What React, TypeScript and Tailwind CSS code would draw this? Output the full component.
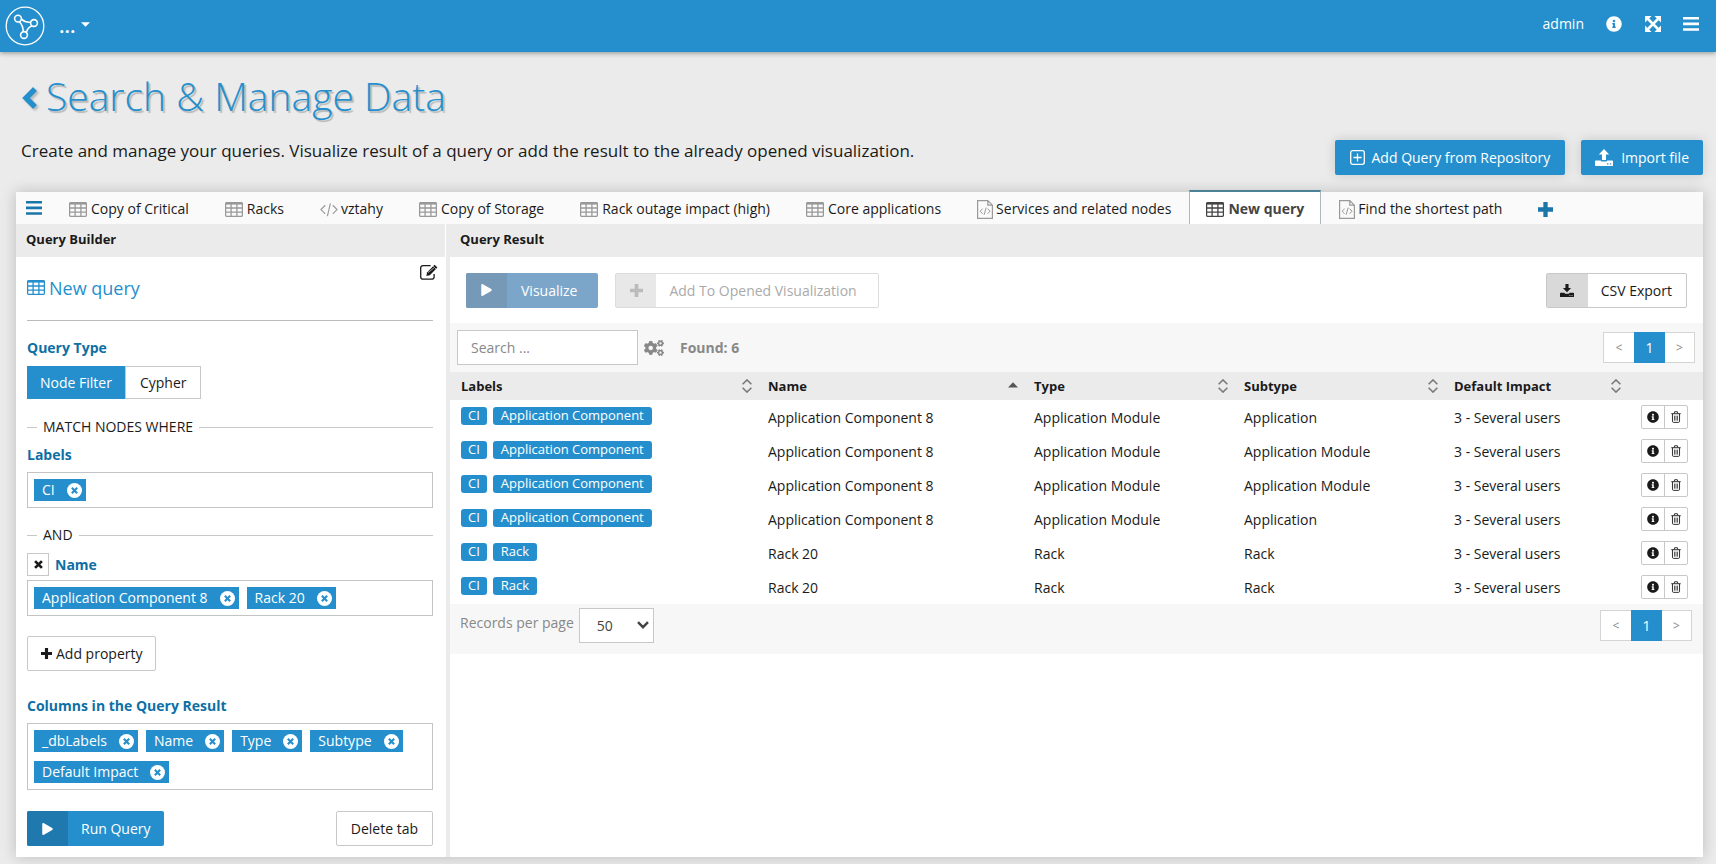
import React from "react";
import { FaCogs, FaInfoCircle, FaPlay } from "react-icons/fa";

const TableIcon = ({ className = "" }: { className?: string }) => (
  <svg viewBox="0 0 18 15" className={"h-[15px] w-[18px] shrink-0 " + className} fill="none" stroke="currentColor" aria-hidden="true">
    <rect x="0.6" y="0.6" width="16.8" height="13.8" rx="1.2" strokeWidth="1.3" />
    <path d="M0.6 1.6H17.4" strokeWidth="2" />
    <path d="M0.6 6H17.4M0.6 10.2H17.4M6.1 2V14.4M11.9 2V14.4" strokeWidth="1.3" />
  </svg>
);

const CodeIcon = () => (
  <svg viewBox="0 0 19 15" className="h-[15px] w-[18px] shrink-0 text-[#999]" fill="none" stroke="currentColor" strokeWidth="1.2" aria-hidden="true">
    <path d="M5.5 3L1 7.6L5.5 12.2M13.5 3L18 7.6L13.5 12.2M11 1L7.8 14.4" />
  </svg>
);

const FileCodeIcon = () => (
  <svg viewBox="0 0 16 19" className="h-[19px] w-4 shrink-0 text-[#999]" fill="none" stroke="currentColor" aria-hidden="true">
    <path d="M0.6 0.6H10.8L15.4 5.2V18.4H0.6ZM10.8 0.6V5.2H15.4" strokeWidth="1.2" />
    <path d="M5.6 8.6L3.2 11.2L5.6 13.8M10.6 8.6L13 11.2L10.6 13.8M9.2 7.6L7.1 14.8" strokeWidth="1" />
  </svg>
);

const BarsIcon = ({ className = "" }: { className?: string }) => (
  <svg viewBox="0 0 16 14" className={"h-[14px] w-4 " + className} fill="currentColor" aria-hidden="true">
    <path d="M0 0H16V2.6H0ZM0 5.6H16V8.2H0ZM0 11.2H16V13.8H0Z" />
  </svg>
);

const PlusIcon = ({ className = "" }: { className?: string }) => (
  <svg viewBox="0 0 14 14" className={"shrink-0 " + className} fill="none" stroke="currentColor" strokeWidth="4" aria-hidden="true">
    <path d="M7 0V14M0 7H14" />
  </svg>
);

const CrossIcon = ({ className = "" }: { className?: string }) => (
  <svg viewBox="0 0 10 10" className={"shrink-0 " + className} fill="none" stroke="currentColor" strokeWidth="3" aria-hidden="true">
    <path d="M1.2 1.2L8.8 8.8M8.8 1.2L1.2 8.8" />
  </svg>
);

const ChevronIcon = () => (
  <svg viewBox="0 0 18 24" className="h-6 w-[18px] drop-shadow-[2px_2px_1px_rgba(0,0,0,0.22)]" fill="none" stroke="currentColor" strokeWidth="5.4" aria-hidden="true">
    <path d="M14 3L5 12L14 21" />
  </svg>
);

const ExpandIcon = () => (
  <svg viewBox="0 0 16 16" className="h-4 w-4" aria-hidden="true">
    <path d="M3 3L13 13M13 3L3 13" stroke="currentColor" strokeWidth="2.6" />
    <path d="M0 0H6.6L0 6.6ZM16 0V6.6L9.4 0ZM0 16V9.4L6.6 16ZM16 16H9.4L16 9.4Z" fill="currentColor" />
  </svg>
);

const EditIcon = () => (
  <svg viewBox="0 0 18 16" className="h-4 w-[18px]" aria-hidden="true">
    <path d="M10.6 1.6H3.2Q0.7 1.6 0.7 4.1V12.7Q0.7 15.2 3.2 15.2H11.6Q14.1 15.2 14.1 12.7V10" fill="none" stroke="currentColor" strokeWidth="1.3" />
    <path d="M14.6 0.7L17.4 3.4L9.8 11.2L6.4 12.1L7 8.6Z" fill="currentColor" />
    <path d="M13.2 2.2L16 5M8 8.6L14 3.9" stroke="white" strokeWidth="0.6" />
  </svg>
);

const TrashIcon = () => (
  <svg viewBox="0 0 11 13" className="h-[12px] w-[10px]" fill="none" stroke="currentColor" aria-hidden="true">
    <path d="M0.3 2.9H10.7M3.4 2.8L4 0.7H7L7.6 2.8M1.6 3V11.2Q1.6 12.4 2.8 12.4H8.2Q9.4 12.4 9.4 11.2V3" strokeWidth="1" />
    <path d="M3.8 5V10.5M5.5 5V10.5M7.2 5V10.5" strokeWidth="0.8" />
  </svg>
);

const TrayIcon = ({ up = false, className = "" }: { up?: boolean; className?: string }) => (
  <svg viewBox="0 0 18 17" className={"shrink-0 " + className} fill="currentColor" aria-hidden="true">
    {up ? <path d="M9 0L14.2 5.6H11V11H7V5.6H3.8Z" /> : <path d="M7 0H11V5.2H14.2L9 10.6L3.8 5.2H7Z" />}
    <path fillRule="evenodd" d="M0.8 11.4H5.6L6.6 12.6H11.4L12.4 11.4H17.2Q18 11.4 18 12.2V16.2Q18 17 17.2 17H0.8Q0 17 0 16.2V12.2Q0 11.4 0.8 11.4ZM12 14.2V15.4H13.4V14.2ZM14.8 14.2V15.4H16.2V14.2Z" />
  </svg>
);

const Logo = () => (
  <svg viewBox="0 0 40 40" className="h-10 w-10" fill="none" stroke="white" aria-hidden="true">
    <circle cx="20" cy="20" r="18.8" strokeWidth="1.3" />
    <g strokeWidth="1.6">
      <circle cx="13" cy="12.6" r="3.4" />
      <circle cx="29" cy="17" r="3.4" />
      <circle cx="19" cy="29" r="3.4" />
      <path d="M16.4 13.2Q20 16.6 25.6 16.2M27 19.8Q22.6 21.6 21.4 26.4M18.2 25.6Q18.2 19.6 14.4 15.8" />
    </g>
  </svg>
);

const tabs = [
  { kind: "table", label: "Copy of Critical" },
  { kind: "table", label: "Racks" },
  { kind: "code", label: "vztahy" },
  { kind: "table", label: "Copy of Storage" },
  { kind: "table", label: "Rack outage impact (high)" },
  { kind: "table", label: "Core applications" },
  { kind: "file", label: "Services and related nodes" },
  { kind: "table", label: "New query", active: true },
  { kind: "file", label: "Find the shortest path" },
];

const rows = [
  ["Application Component", "Application Component 8", "Application Module", "Application"],
  ["Application Component", "Application Component 8", "Application Module", "Application Module"],
  ["Application Component", "Application Component 8", "Application Module", "Application Module"],
  ["Application Component", "Application Component 8", "Application Module", "Application"],
  ["Rack", "Rack 20", "Rack", "Rack"],
  ["Rack", "Rack 20", "Rack", "Rack"],
];

const Chip = ({ children }: { children: string }) => (
  <span className="flex h-[22px] items-center bg-[#258fcd] pr-1 pl-2 text-white">
    {children}
    <button type="button" aria-label={"Remove " + children} className="ml-3 flex h-[15px] w-[15px] items-center justify-center rounded-full bg-white text-[#258fcd]">
      <CrossIcon className="h-[7px] w-[7px]" />
    </button>
  </span>
);

const ChipBox = ({ label, items }: { label: string; items: string[] }) => (
  <div role="group" aria-label={label} className="flex flex-wrap content-start gap-x-2 gap-y-[9px] border border-[#c4c4c4] px-[6px] py-[6px]">
    {items.map((i) => (
      <Chip key={i}>{i}</Chip>
    ))}
  </div>
);

const Divider = ({ children }: { children: string }) => (
  <div className="flex h-5 items-center gap-[6px]">
    <span className="h-px w-[10px] bg-[#c8c8c8]" />
    {children}
    <span className="h-px flex-1 bg-[#c8c8c8]" />
  </div>
);

const Pager = () => (
  <nav aria-label="Pages" className="flex h-[31px] border border-[#d5d5d5] bg-white text-[12px] text-[#888]">
    <button type="button" aria-label="Previous page" className="w-[30px]">&lt;</button>
    <button type="button" aria-current="page" className="-my-px w-[31px] bg-[#258fcd] text-[14px] text-white">1</button>
    <button type="button" aria-label="Next page" className="w-[29px]">&gt;</button>
  </nav>
);

const Sort = ({ asc }: { asc?: boolean }) =>
  asc ? (
    <svg viewBox="0 0 10 14" className="h-[14px] w-[10px] text-[#555]" aria-hidden="true">
      <path d="M0 8.6L5 3.2L10 8.6Z" fill="currentColor" />
    </svg>
  ) : (
    <svg viewBox="0 0 10 14" className="h-[14px] w-[10px] text-[#777]" fill="none" stroke="currentColor" strokeWidth="1.5" aria-hidden="true">
      <path d="M0.6 5.2L5 0.9L9.4 5.2M0.6 8.8L5 13.1L9.4 8.8" />
    </svg>
  );

const whiteButton = "border border-[#c8c8c8] bg-white rounded-[2px]";
const fieldLabel = "font-bold leading-5 text-[#0e6fa5]";

export default function App() {
  return (
    <div className="flex min-h-screen flex-col bg-[#ebebeb] pb-[7px] font-['Open_Sans','Noto_Sans',sans-serif] text-[14px] leading-5 text-[#1a1a1a]">
      <header className="relative flex h-[52px] items-center bg-[#258fcd] pr-[17px] pl-[5px] text-white shadow-[0_1px_5px_rgba(0,0,0,0.4)]">
        <a href="#home" aria-label="Home"><Logo /></a>
        <button type="button" className="ml-[14px] flex items-center gap-[6px]">
          <span className="text-[20px] leading-6 font-semibold">...</span>
          <svg viewBox="0 0 8 4" className="mb-1 h-[5px] w-[9px]" fill="currentColor" aria-hidden="true"><path d="M0 0H8L4 4Z" /></svg>
        </button>
        <div className="ml-auto flex items-center pb-1">
          <a href="#admin" className="mr-[22px]">admin</a>
          <button type="button" aria-label="Information" className="mr-[23px]"><FaInfoCircle className="h-4 w-4" /></button>
          <button type="button" aria-label="Full screen" className="mr-[22px]"><ExpandIcon /></button>
          <button type="button" aria-label="Menu"><BarsIcon /></button>
        </div>
      </header>

      <div className="flex items-end justify-between pt-4 pr-[13px] pl-[21px]">
        <div>
          <h1 className="flex items-center gap-[7px] text-[39px] leading-[56px] font-light text-[#258fcd] [text-shadow:2px_2px_1px_rgba(0,0,0,0.22)]">
            <a href="#back" aria-label="Back" className="mt-1"><ChevronIcon /></a>
            Search &amp; Manage Data
          </h1>
          <p className="mt-[14px] mb-7 text-[17px] leading-[26px]">
            Create and manage your queries. Visualize result of a query or add the result to the already opened visualization.
          </p>
        </div>
        <div className="mb-[17px] flex gap-4 text-white">
          <button type="button" className="flex h-[35px] items-center gap-[7px] rounded-[2px] bg-[#258fcd] px-[15px] shadow-[0_0_12px_rgba(0,0,0,0.15)]">
            <svg viewBox="0 0 15 15" className="h-[15px] w-[15px]" fill="none" stroke="currentColor" strokeWidth="1.3" aria-hidden="true">
              <rect x="0.7" y="0.7" width="13.6" height="13.6" rx="2" />
              <path d="M7.5 3.4V11.6M3.4 7.5H11.6" />
            </svg>
            Add Query from Repository
          </button>
          <button type="button" className="flex h-[35px] items-center gap-2 rounded-[2px] bg-[#258fcd] px-[14px] shadow-[0_0_12px_rgba(0,0,0,0.15)]">
            <TrayIcon up className="h-[17px] w-[18px]" />
            Import file
          </button>
        </div>
      </div>

      <main className="mr-[13px] ml-4 flex flex-1 flex-col bg-white shadow-[0_0_14px_rgba(0,0,0,0.2)]">
        <div className="flex h-8 items-end bg-[#fafafa]">
          <button type="button" aria-label="Tab list" className="mr-[9px] ml-[10px] self-center text-[#1b75a8]"><BarsIcon /></button>
          {tabs.map((t) => (
            <a
              key={t.label}
              href="#tab"
              aria-current={t.active ? "page" : undefined}
              className={
                t.active
                  ? "flex h-[34px] items-center gap-1 border-x border-t-2 border-x-[#b0b8bc] border-t-[#4b8296] bg-white px-4 pt-[2px] font-bold text-[#444]"
                  : t.kind === "table"
                    ? "flex h-8 items-center gap-1 px-[18px] pt-[2px]"
                    : "flex h-8 items-center gap-[3px] px-[18px] pt-[2px]"
              }
            >
              {t.kind === "table" && <TableIcon className={t.active ? "text-[#444]" : "text-[#999]"} />}
              {t.kind === "code" && <CodeIcon />}
              {t.kind === "file" && <FileCodeIcon />}
              {t.label}
            </a>
          ))}
          <button type="button" aria-label="New tab" className="ml-[18px] self-center pt-[2px] text-[#1b75a8]"><PlusIcon className="h-[15px] w-[15px]" /></button>
        </div>

        <div className="flex flex-1">
          <section className="flex w-[429px] shrink-0 flex-col">
            <h2 className="h-[33px] bg-[#ebebeb] pl-[10px] text-[13px] leading-[31px] font-bold">Query Builder</h2>
            <div className="flex flex-1 flex-col pr-3 pl-[11px]">
              <div className="flex h-16 justify-between border-b border-[#bbb]">
                <h3 className="mb-[2px] flex items-center gap-1 self-center text-[18px] leading-6 text-[#258fcd]">
                  <TableIcon />
                  New query
                </h3>
                <button type="button" aria-label="Rename query" className="-mr-[5px] mt-[7px] self-start"><EditIcon /></button>
              </div>
              <div className={"mt-[17px] " + fieldLabel}>Query Type</div>
              <div className="mt-2 flex h-[33px]">
                <button type="button" className="bg-[#258fcd] px-[13px] text-white">Node Filter</button>
                <button type="button" className="border border-[#c8c8c8] px-[14px]">Cypher</button>
              </div>
              <div className="mt-[18px]"><Divider>MATCH NODES WHERE</Divider></div>
              <div className={"mt-2 mb-[7px] " + fieldLabel}>Labels</div>
              <ChipBox label="Labels" items={["CI"]} />
              <div className="mt-[17px]"><Divider>AND</Divider></div>
              <div className="mt-2 mb-1 flex items-center gap-[6px]">
                <button type="button" aria-label="Remove Name" className="flex h-[23px] w-[22px] items-center justify-center border border-[#c8c8c8]"><CrossIcon className="h-[9px] w-[9px]" /></button>
                <span className={fieldLabel}>Name</span>
              </div>
              <ChipBox label="Name" items={["Application Component 8", "Rack 20"]} />
              <button type="button" className={"mt-5 flex h-[35px] items-center gap-1 self-start px-[13px] " + whiteButton}>
                <PlusIcon className="h-[11px] w-[11px]" />
                Add property
              </button>
              <div className={"mt-[25px] mb-[7px] " + fieldLabel}>Columns in the Query Result</div>
              <ChipBox label="Columns in the Query Result" items={["_dbLabels", "Name", "Type", "Subtype", "Default Impact"]} />
              <div className="mt-[21px] mb-[10px] flex justify-between">
                <button type="button" className="flex h-[35px] overflow-hidden rounded-[2px] bg-[#258fcd] text-white">
                  <span className="flex h-full w-[41px] items-center justify-center bg-[#2079ae]"><FaPlay className="h-3 w-[11px]" /></span>
                  <span className="px-[13px] leading-[35px]">Run Query</span>
                </button>
                <button type="button" className={"h-[35px] px-[14px] " + whiteButton}>Delete tab</button>
              </div>
            </div>
          </section>

          <div className="w-[5px] shrink-0 border-l border-white bg-[#ebebeb]" />

          <section className="min-w-0 flex-1">
            <h2 className="h-[33px] bg-[#ebebeb] pl-[10px] text-[13px] leading-[31px] font-bold">Query Result</h2>
            <div className="flex h-[66px] items-center pr-4 pl-4">
              <button type="button" disabled className="flex h-[35px] overflow-hidden rounded-[2px] bg-[#7ba6ca] text-white">
                <span className="flex h-full w-[41px] items-center justify-center bg-[#7699b8]"><FaPlay className="h-3 w-[11px]" /></span>
                <span className="pr-[21px] pl-[14px] leading-[35px]">Visualize</span>
              </button>
              <button type="button" disabled className="ml-[17px] flex h-[35px] rounded-[2px] border border-[#dcdcdc] text-[#aaa]">
                <span className="flex h-full w-10 items-center justify-center bg-[#e8e8e8] text-[#bbb]"><PlusIcon className="h-[13px] w-[13px]" /></span>
                <span className="pr-[21px] pl-[13px] leading-[33px]">Add To Opened Visualization</span>
              </button>
              <button type="button" className="ml-auto flex h-[35px] rounded-[2px] border border-[#c8c8c8]">
                <span className="flex h-full w-[41px] items-center justify-center bg-[#d9d9d9]"><TrayIcon className="h-[15px] w-[14px]" /></span>
                <span className="pr-[14px] pl-[13px] leading-[33px]">CSV Export</span>
              </button>
            </div>

            <div className="flex h-[49px] items-center bg-[#f7f7f7] pr-2 pl-[7px]">
              <input aria-label="Search" placeholder="Search ..." className="h-[35px] w-[181px] border border-[#c8c8c8] bg-white px-[13px] placeholder:text-[#888]" />
              <button type="button" aria-label="Search settings" className="ml-[6px] text-[#888]"><FaCogs className="h-[18px] w-5" /></button>
              <span className="ml-4 font-bold text-[#888]">Found: 6</span>
              <div className="ml-auto"><Pager /></div>
            </div>

            <table className="w-full table-fixed text-left">
              <colgroup>
                <col className="w-[307px]" />
                <col className="w-[266px]" />
                <col className="w-[210px]" />
                <col className="w-[210px]" />
                <col className="w-[183px]" />
                <col className="w-[77px]" />
              </colgroup>
              <thead>
                <tr className="h-7 bg-[#ebebeb] text-[13px]">
                  {["Labels", "Name", "Type", "Subtype", "Default Impact"].map((h) => (
                    <th key={h} scope="col" aria-sort={h === "Name" ? "ascending" : undefined} className="py-0 pr-[5px] pl-[11px] font-bold">
                      <button type="button" className="flex w-full items-center justify-between font-bold">
                        {h}
                        <Sort asc={h === "Name"} />
                      </button>
                    </th>
                  ))}
                  <td />
                </tr>
              </thead>
              <tbody>
                {rows.map((r, n) => (
                  <tr key={n} className="h-[34px]">
                    <td className="py-0 pl-[11px]">
                      <div className="mb-[2px] flex gap-[6px] text-[13px] text-white">
                        <span className="h-[18px] rounded-[3px] bg-[#258fcd] px-[7px] leading-[17px]">CI</span>
                        <span className="h-[18px] rounded-[3px] bg-[#258fcd] px-2 leading-[17px]">{r[0]}</span>
                      </div>
                    </td>
                    <td className="py-0 pt-[2px] pl-[11px]">{r[1]}</td>
                    <td className="py-0 pt-[2px] pl-[11px]">{r[2]}</td>
                    <td className="py-0 pt-[2px] pl-[11px]">{r[3]}</td>
                    <td className="py-0 pt-[2px] pl-[11px]">3 - Several users</td>
                    <td className="py-0 pr-[15px]">
                      <div className="ml-auto flex h-6 w-[47px] rounded-[2px] border border-[#c8c8c8]">
                        <button type="button" aria-label="Details" className="flex flex-1 items-center justify-center border-r border-[#c8c8c8]"><FaInfoCircle className="h-3 w-3" /></button>
                        <button type="button" aria-label="Delete" className="flex flex-1 items-center justify-center"><TrashIcon /></button>
                      </div>
                    </td>
                  </tr>
                ))}
              </tbody>
            </table>

            <div className="flex h-[50px] items-start bg-[#f7f7f7] pr-[11px] pl-[10px]">
              <label htmlFor="per-page" className="mt-[9px] text-[#888]">Records per page</label>
              <div className="relative mt-1 ml-[5px]">
                <select id="per-page" defaultValue="50" className="h-[35px] w-[75px] appearance-none border border-[#c8c8c8] bg-white pl-[17px] text-[#444]">
                  <option>50</option>
                  <option>100</option>
                </select>
                <svg viewBox="0 0 12 8" className="pointer-events-none absolute top-[13px] right-[5px] h-2 w-3 text-[#444]" fill="none" stroke="currentColor" strokeWidth="2.4" aria-hidden="true">
                  <path d="M1 1.2L6 6.2L11 1.2" />
                </svg>
              </div>
              <div className="mt-[6px] ml-auto"><Pager /></div>
            </div>
          </section>
        </div>
      </main>
    </div>
  );
}
